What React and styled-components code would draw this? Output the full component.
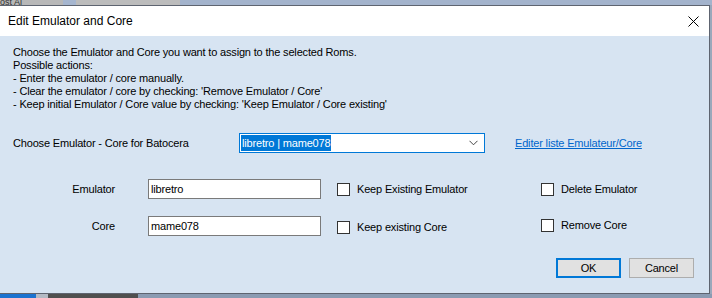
import React from "react";
import styled, { createGlobalStyle } from "styled-components";

const Global = createGlobalStyle`
  html, body { margin: 0; padding: 0; background: #8e9db3; overflow: hidden; }
  body { font-family: "Liberation Sans", Arial, sans-serif; }
`;

const Page = styled.div`
  width: 712px;
  height: 298px;
  display: flex;
  flex-direction: column;
  overflow: hidden;
`;

const TopStrip = styled.div`
  height: 5px;
  display: flex;
`;

const Seg = styled.div`
  width: ${(p) => (p.$w ? `${p.$w}px` : "auto")};
  flex: ${(p) => (p.$w ? "none" : "1")};
  background: ${(p) => p.$c};
  font-size: 9px;
  line-height: 4px;
  color: #333;
  overflow: hidden;
  white-space: nowrap;
`;

const Middle = styled.div`
  display: flex;
  height: 289px;
`;

const Window = styled.div`
  width: 709px;
  border: 1px solid #5e6470;
  border-left: none;
  display: flex;
  flex-direction: column;
  background: #d7e4f2;
`;

const RightStrip = styled.div`
  flex: 1;
  background: #9aa8bb;
`;

const TitleBar = styled.div`
  height: 30px;
  background: #ffffff;
  display: flex;
  align-items: center;
  justify-content: space-between;
  padding: 0 10px 0 8px;
  font-size: 12px;
  color: #000;
`;

const Body = styled.div`
  flex: 1;
  padding: 10px 0 0 13px;
  color: #000;
  font-size: 11px;
  letter-spacing: -0.17px;
`;

const Instructions = styled.div`
  line-height: 13px;
  white-space: pre;
`;

const ComboRow = styled.div`
  display: flex;
  align-items: center;
  margin-top: 22px;
  height: 20px;
`;

const ComboLabel = styled.div`
  width: 226px;
`;

const Combo = styled.div`
  box-sizing: border-box;
  width: 246px;
  height: 20px;
  border: 1px solid #0078d7;
  background: #fff;
  display: flex;
  align-items: center;
  padding: 0 6px 0 1px;
  justify-content: space-between;
`;

const Selected = styled.span`
  background: #0078d7;
  color: #fff;
  height: 16px;
  line-height: 16px;
  padding: 0 1px;
`;

const LinkText = styled.a`
  margin-left: 30px;
  color: #0066cc;
  text-decoration: underline;
  cursor: pointer;
`;

const Fields = styled.div`
  display: grid;
  grid-template-columns: 135px 173px 220px auto;
  row-gap: 17px;
  margin-top: 26px;
  align-items: center;
`;

const FieldLabel = styled.div`
  justify-self: end;
  margin-right: 33px;
`;

const Input = styled.div`
  box-sizing: border-box;
  height: 20px;
  border: 1px solid #7a7a7a;
  background: #fff;
  line-height: 18px;
  padding-left: 2px;
`;

const Check = styled.label`
  display: flex;
  align-items: center;
  gap: 7px;
  margin-left: ${(p) => p.$ml ?? 16}px;
  margin-top: ${(p) => p.$mt || 0}px;
`;

const Box = styled.span`
  width: 11px;
  height: 11px;
  border: 1px solid #333;
  background: #fff;
  display: inline-block;
`;

const Buttons = styled.div`
  display: flex;
  justify-content: flex-end;
  gap: 8px;
  margin-top: 22px;
  padding-right: 15px;
`;

const Button = styled.div`
  width: 65px;
  height: 20px;
  box-sizing: border-box;
  border: ${(p) => (p.$primary ? "2px solid #0078d7" : "1px solid #adadad")};
  background: #e1e1e1;
  display: flex;
  align-items: center;
  justify-content: center;
  font-size: 11px;
`;

const BottomStrip = styled.div`
  height: 4px;
  display: flex;
`;

const Chevron = () => (
  <svg width="9" height="6" viewBox="0 0 9 6">
    <path d="M0.5 0.8 L4.5 4.8 L8.5 0.8" fill="none" stroke="#444" strokeWidth="1" />
  </svg>
);

const CloseX = () => (
  <svg width="11" height="11" viewBox="0 0 11 11">
    <path d="M0.5 0.5 L10.5 10.5 M10.5 0.5 L0.5 10.5" stroke="#000" strokeWidth="1" />
  </svg>
);

export default function App() {
  return (
    <>
      <Global />
      <Page>
        <TopStrip>
          <Seg $w={63} $c="#b8b8b8">ost Al</Seg>
          <Seg $w={13} $c="#a6b6cf" />
          <Seg $w={104} $c="#bcbcbc" />
          <Seg $c="#a3b3cc" />
        </TopStrip>
        <Middle>
          <Window>
            <TitleBar>
              <span>Edit Emulator and Core</span>
              <CloseX />
            </TitleBar>
            <Body>
              <Instructions>
                {`Choose the Emulator and Core you want to assign to the selected Roms.
Possible actions:
- Enter the emulator / core manually.
- Clear the emulator / core by checking: 'Remove Emulator / Core'
- Keep initial Emulator / Core value by checking: 'Keep Emulator / Core existing'`}
              </Instructions>
              <ComboRow>
                <ComboLabel>Choose Emulator - Core for Batocera</ComboLabel>
                <Combo>
                  <Selected>libretro | mame078</Selected>
                  <Chevron />
                </Combo>
                <LinkText>Editer liste Emulateur/Core</LinkText>
              </ComboRow>
              <Fields>
                <FieldLabel>Emulator</FieldLabel>
                <Input>libretro</Input>
                <Check>
                  <Box />
                  Keep Existing Emulator
                </Check>
                <Check $ml={0}>
                  <Box />
                  Delete Emulator
                </Check>
                <FieldLabel>Core</FieldLabel>
                <Input>mame078</Input>
                <Check $mt={2}>
                  <Box />
                  Keep existing Core
                </Check>
                <Check $ml={0} $mt={-2}>
                  <Box />
                  Remove Core
                </Check>
              </Fields>
              <Buttons>
                <Button $primary>OK</Button>
                <Button>Cancel</Button>
              </Buttons>
            </Body>
          </Window>
          <RightStrip />
        </Middle>
        <BottomStrip>
          <Seg $w={36} $c="#1b72cf" />
          <Seg $w={12} $c="#b4bac4" />
          <Seg $w={90} $c="#4f4f4f" />
          <Seg $c="#8b9bb2" />
        </BottomStrip>
      </Page>
    </>
  );
}
